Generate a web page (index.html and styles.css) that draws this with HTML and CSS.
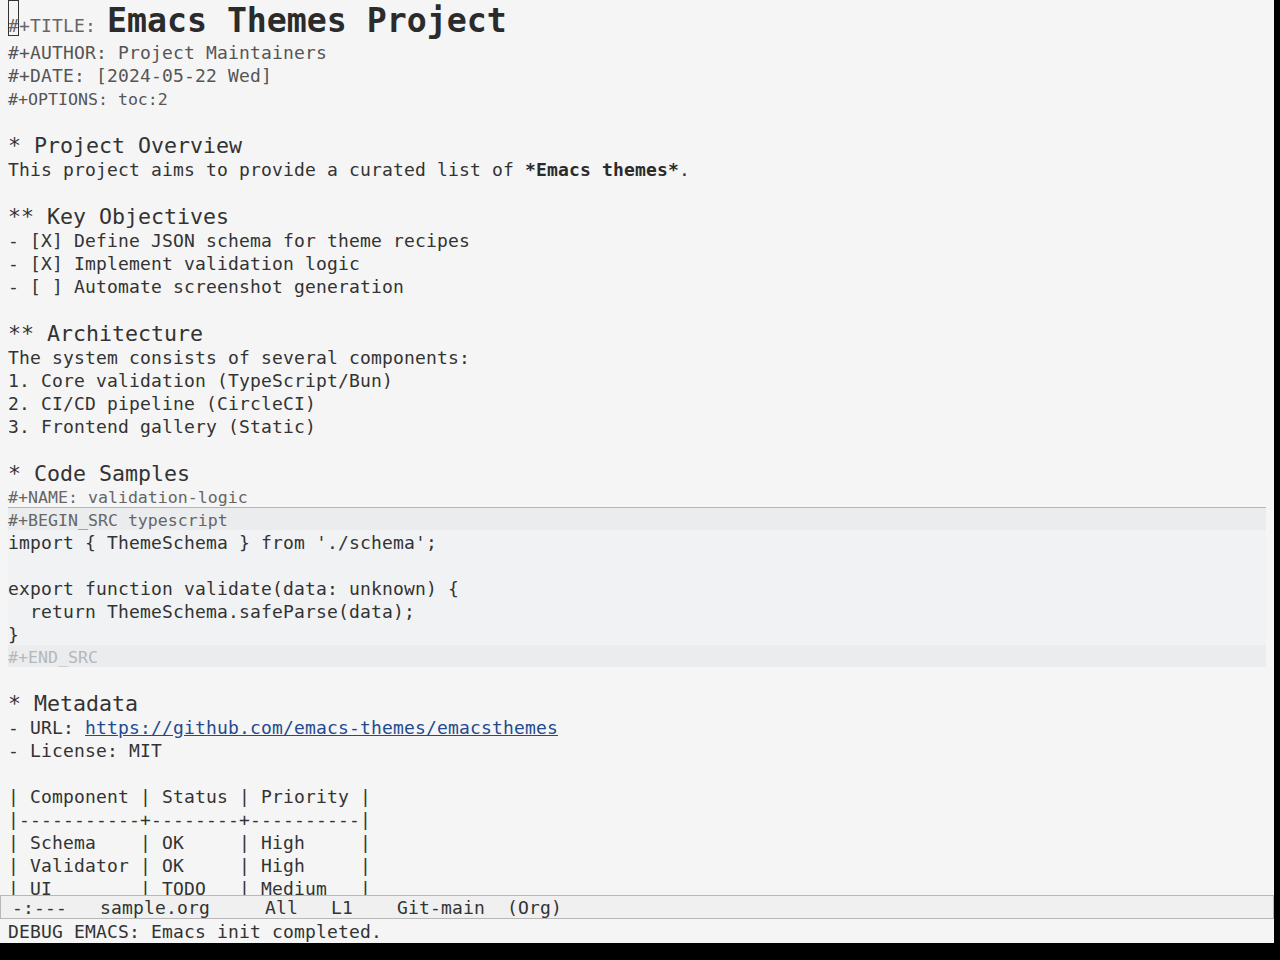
FILE: index.html
```html
<!DOCTYPE html>
<html>
<head>
<meta charset="utf-8">
<title>sample.org</title>
<link rel="stylesheet" href="styles.css">
</head>
<body>
<div class="frame">
  <div class="buffer">
    <div class="cursor"></div>
    <div class="ln title-line"><span class="kw">#+TITLE: </span><span class="title">Emacs Themes Project</span></div>
    <div class="ln meta">#+AUTHOR: Project Maintainers</div>
    <div class="ln meta">#+DATE: [2024-05-22 Wed]</div>
    <div class="ln small meta-sm">#+OPTIONS: toc:2</div>
    <div class="ln"></div>
    <div class="ln h">* Project Overview</div>
    <div class="ln">This project aims to provide a curated list of <b class="bold">*Emacs themes*</b>.</div>
    <div class="ln"></div>
    <div class="ln h">** Key Objectives</div>
    <div class="ln">- [X] Define JSON schema for theme recipes</div>
    <div class="ln">- [X] Implement validation logic</div>
    <div class="ln">- [ ] Automate screenshot generation</div>
    <div class="ln"></div>
    <div class="ln h">** Architecture</div>
    <div class="ln">The system consists of several components:</div>
    <div class="ln">1. Core validation (TypeScript/Bun)</div>
    <div class="ln">2. CI/CD pipeline (CircleCI)</div>
    <div class="ln">3. Frontend gallery (Static)</div>
    <div class="ln"></div>
    <div class="ln h">* Code Samples</div>
    <div class="ln small name">#+NAME: validation-logic</div>
    <div class="ln small src-begin">#+BEGIN_SRC typescript</div>
    <div class="ln src">import { ThemeSchema } from './schema';</div>
    <div class="ln src"></div>
    <div class="ln src">export function validate(data: unknown) {</div>
    <div class="ln src">  return ThemeSchema.safeParse(data);</div>
    <div class="ln src">}</div>
    <div class="ln small src-end">#+END_SRC</div>
    <div class="ln"></div>
    <div class="ln h">* Metadata</div>
    <div class="ln">- URL: <span class="link">https://github.com/emacs-themes/emacsthemes</span></div>
    <div class="ln">- License: MIT</div>
    <div class="ln"></div>
    <div class="ln">| Component | Status | Priority |</div>
    <div class="ln">|-----------+--------+----------|</div>
    <div class="ln">| Schema    | OK     | High     |</div>
    <div class="ln">| Validator | OK     | High     |</div>
    <div class="ln">| UI        | TODO   | Medium   |</div>
  </div>
  <div class="modeline"> -:---   sample.org     All   L1    Git-main  (Org)</div>
  <div class="echo">DEBUG EMACS: Emacs init completed.</div>
</div>
</body>
</html>
```

FILE: styles.css
```css
html, body {
  margin: 0;
  padding: 0;
  background: #000;
}

.frame {
  width: 1274px;
  height: 943px;
  background: #f5f5f5;
  display: flex;
  flex-direction: column;
  font-family: "DejaVu Sans Mono", monospace;
  font-size: 18px;
  letter-spacing: 0.163px;
  color: #333333;
}

.buffer {
  position: relative;
  height: 895px;
  flex: none;
  overflow: hidden;
  padding: 0 8px;
}

.cursor {
  position: absolute;
  left: 8px;
  top: 0;
  width: 11px;
  height: 36px;
  box-sizing: border-box;
  border: 1px solid #333;
}

.ln {
  box-sizing: border-box;
  height: 23px;
  line-height: 23px;
  padding-top: 1px;
  white-space: pre;
}

.title-line {
  height: 41px;
  line-height: 41px;
  padding-top: 0;
}

.kw {
  color: #666;
}

.title {
  font-size: 33.2px;
  font-weight: bold;
  letter-spacing: 0;
  color: #2b2b2b;
}

.meta {
  color: #555;
  padding-top: 0;
}

.small {
  font-size: 16.6px;
  letter-spacing: 0;
  height: 22px;
  line-height: 22px;
  padding-top: 2px;
}

.meta-sm {
  color: #555;
}

.h {
  font-size: 21.6px;
  letter-spacing: 0;
  height: 25px;
  line-height: 25px;
  padding-top: 1px;
  color: #333;
}

.bold {
  font-weight: bold;
  color: #2b2b2b;
}

.name {
  color: #666;
}

.src-begin {
  height: 23px;
  line-height: 23px;
  padding-top: 1px;
  color: #666;
  background: #ebeced;
  border-top: 1px solid #b4b6b8;
}

.src {
  background: #f1f2f3;
}

.src-end {
  color: #b3b8bc;
  background: #ebeced;
}

.link {
  color: #1f4b8f;
  text-decoration: underline;
}

.modeline {
  flex: none;
  height: 24px;
  line-height: 22px;
  box-sizing: border-box;
  border: 1px solid #b8b8b8;
  background: #f0f0f0;
  padding: 1px 0 0 0;
  white-space: pre;
  color: #333;
}

.echo {
  flex: none;
  height: 24px;
  box-sizing: border-box;
  line-height: 24px;
  padding: 1px 0 0 8px;
  white-space: pre;
  color: #333;
}
```
